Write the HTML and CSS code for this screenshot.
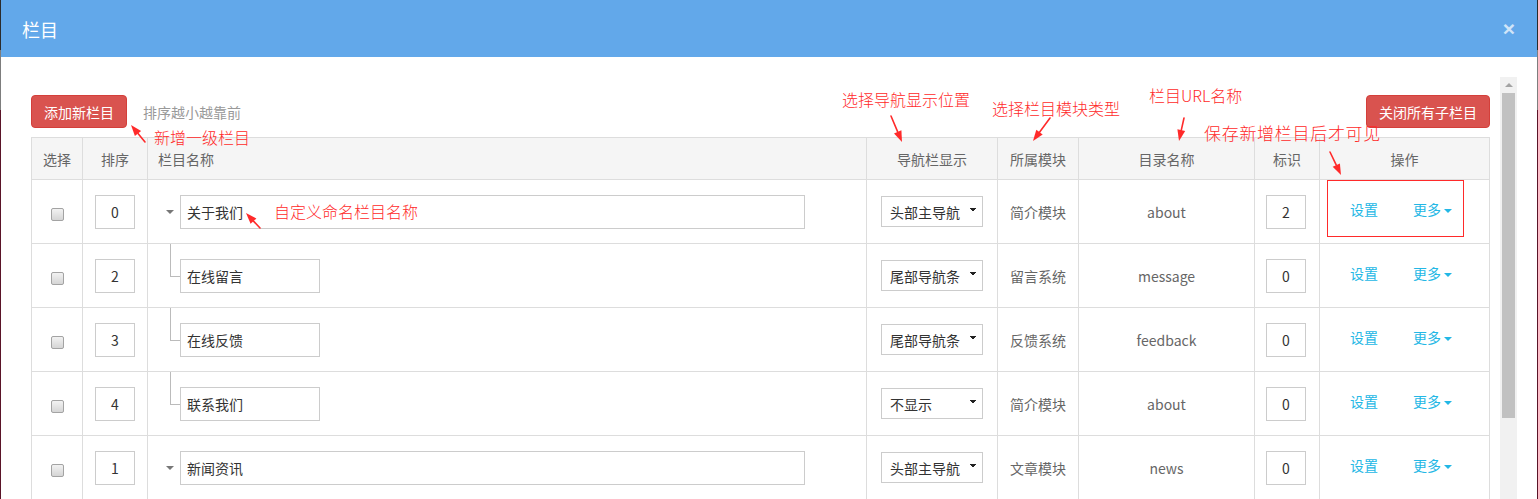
FILE: index.html
```html
<!DOCTYPE html>
<html lang="zh-CN">
<head>
<meta charset="utf-8">
<title>栏目</title>
<link rel="stylesheet" href="styles.css">
</head>
<body>
<div class="page">
  <div class="modal">
    <div class="modal-header">
      <h4 class="modal-title">栏目</h4>
      <span class="close">×</span>
    </div>
    <div class="modal-body">
      <div class="content">
        <div class="toolbar">
          <div class="toolbar-left">
            <button class="btn btn-danger">添加新栏目</button>
            <span class="hint">排序越小越靠前</span>
          </div>
          <button class="btn btn-danger">关闭所有子栏目</button>
        </div>
        <table class="grid">
          <colgroup>
            <col class="c-check"><col class="c-order"><col class="c-name"><col class="c-nav">
            <col class="c-mod"><col class="c-dir"><col class="c-flag"><col class="c-op">
          </colgroup>
          <thead>
            <tr>
              <th>选择</th><th>排序</th><th class="th-name">栏目名称</th><th>导航栏显示</th>
              <th>所属模块</th><th>目录名称</th><th>标识</th><th>操作</th>
            </tr>
          </thead>
          <tbody>
            <tr>
              <td><input type="checkbox" class="chk"></td>
              <td><input class="txt txt-order" value="0"></td>
              <td class="td-name"><div class="name-wrap"><span class="caret-down"></span><input class="txt txt-name" value="关于我们"></div></td>
              <td><select class="sel"><option>头部主导航</option></select></td>
              <td class="muted">简介模块</td>
              <td class="muted">about</td>
              <td class="td-flag"><input class="txt txt-order" value="2"></td>
              <td class="td-op"><a class="op-link">设置</a><a class="op-link op-more">更多<span class="caret-link"></span></a></td>
            </tr>
            <tr>
              <td><input type="checkbox" class="chk"></td>
              <td><input class="txt txt-order" value="2"></td>
              <td class="td-name"><div class="name-wrap"><span class="tree"></span><input class="txt txt-sub" value="在线留言"></div></td>
              <td><select class="sel"><option>尾部导航条</option></select></td>
              <td class="muted">留言系统</td>
              <td class="muted">message</td>
              <td class="td-flag"><input class="txt txt-order" value="0"></td>
              <td class="td-op"><a class="op-link">设置</a><a class="op-link op-more">更多<span class="caret-link"></span></a></td>
            </tr>
            <tr>
              <td><input type="checkbox" class="chk"></td>
              <td><input class="txt txt-order" value="3"></td>
              <td class="td-name"><div class="name-wrap"><span class="tree"></span><input class="txt txt-sub" value="在线反馈"></div></td>
              <td><select class="sel"><option>尾部导航条</option></select></td>
              <td class="muted">反馈系统</td>
              <td class="muted">feedback</td>
              <td class="td-flag"><input class="txt txt-order" value="0"></td>
              <td class="td-op"><a class="op-link">设置</a><a class="op-link op-more">更多<span class="caret-link"></span></a></td>
            </tr>
            <tr>
              <td><input type="checkbox" class="chk"></td>
              <td><input class="txt txt-order" value="4"></td>
              <td class="td-name"><div class="name-wrap"><span class="tree"></span><input class="txt txt-sub" value="联系我们"></div></td>
              <td><select class="sel"><option>不显示</option></select></td>
              <td class="muted">简介模块</td>
              <td class="muted">about</td>
              <td class="td-flag"><input class="txt txt-order" value="0"></td>
              <td class="td-op"><a class="op-link">设置</a><a class="op-link op-more">更多<span class="caret-link"></span></a></td>
            </tr>
            <tr>
              <td><input type="checkbox" class="chk"></td>
              <td><input class="txt txt-order" value="1"></td>
              <td class="td-name"><div class="name-wrap"><span class="caret-down"></span><input class="txt txt-name" value="新闻资讯"></div></td>
              <td><select class="sel"><option>头部主导航</option></select></td>
              <td class="muted">文章模块</td>
              <td class="muted">news</td>
              <td class="td-flag"><input class="txt txt-order" value="0"></td>
              <td class="td-op"><a class="op-link">设置</a><a class="op-link op-more">更多<span class="caret-link"></span></a></td>
            </tr>
            <tr>
              <td><input type="checkbox" class="chk"></td>
              <td><input class="txt txt-order" value="1"></td>
              <td class="td-name"><div class="name-wrap"><span class="tree"></span><input class="txt txt-sub" value="公司新闻"></div></td>
              <td><select class="sel"><option>不显示</option></select></td>
              <td class="muted">文章模块</td>
              <td class="muted">news</td>
              <td class="td-flag"><input class="txt txt-order" value="0"></td>
              <td class="td-op"><a class="op-link">设置</a><a class="op-link op-more">更多<span class="caret-link"></span></a></td>
            </tr>
          </tbody>
        </table>
      </div>
      <div class="scrollbar">
        <div class="sb-up"><span class="sb-arrow"></span></div>
        <div class="sb-track"><div class="sb-thumb"></div></div>
      </div>
    </div>
  </div>

  <div class="annotations">
    <span class="note note-1">新增一级栏目</span>
    <span class="note note-2">自定义命名栏目名称</span>
    <span class="note note-3">选择导航显示位置</span>
    <span class="note note-4">选择栏目模块类型</span>
    <span class="note note-5">栏目URL名称</span>
    <span class="note note-6">保存新增栏目后才可见</span>
    <div class="note-box"></div>
    <svg class="arrows" width="1538" height="499" viewBox="0 0 1538 499">
      <g stroke="#ff2a2a" stroke-width="1.6" fill="none" stroke-linecap="round">
        <line x1="145" y1="142" x2="138" y2="133.5"/>
        <line x1="260" y1="228" x2="253.5" y2="221.1"/>
        <line x1="891" y1="116" x2="897.7" y2="131.9"/>
        <line x1="1050" y1="118" x2="1039.5" y2="132.2"/>
        <line x1="1184" y1="118" x2="1181.3" y2="130.2"/>
        <line x1="1330" y1="152" x2="1336.3" y2="165.1"/>
      </g>
      <g fill="#ff2a2a">
        <polygon points="131,125 141.1,131 134.9,136"/>
        <polygon points="246,213 256.4,218.4 250.6,223.8"/>
        <polygon points="902,142 901.4,130.3 894,133.5"/>
        <polygon points="1033,141 1042.7,134.6 1036.3,129.8"/>
        <polygon points="1179,141 1185.2,131.1 1177.4,129.3"/>
        <polygon points="1341,175 1339.9,163.4 1332.7,166.8"/>
      </g>
    </svg>
  </div>
</div>
</body>
</html>
```

FILE: styles.css
```css
html, body {
  margin: 0;
  padding: 0;
  height: 100%;
  overflow: hidden;
}

body {
  font-family: "Noto Sans CJK SC", "Noto Sans", sans-serif;
  font-size: 14px;
  line-height: 1.42857;
  color: #333;
  background: linear-gradient(to bottom, #2b2b2b 0, #2b2b2b 50px, #7d7d7d 50px, #7d7d7d 110px, #5a1428 110px);
}

.page {
  position: relative;
  height: 100%;
}

.modal {
  margin: 0 1px;
  height: 100%;
  background: #fff;
  overflow: hidden;
  display: flex;
  flex-direction: column;
}

.modal-header {
  flex: none;
  height: 57px;
  box-sizing: border-box;
  background: #62a8ea;
  display: flex;
  align-items: center;
  justify-content: space-between;
  padding: 0 22px 0 21px;
}

.modal-title {
  margin: 0;
  font-size: 18px;
  font-weight: normal;
  color: #fff;
  line-height: 1;
}

.close {
  font-family: "Liberation Sans", Arial, sans-serif;
  font-size: 21px;
  font-weight: bold;
  line-height: 1;
  color: #fff;
  opacity: .7;
}

.modal-body {
  flex: 1;
  display: flex;
  padding: 20px 20px 0 30px;
  min-height: 0;
}

.content {
  flex: 1;
  padding: 18px 10px 0 0;
  overflow: hidden;
}

.toolbar {
  display: flex;
  align-items: center;
  justify-content: space-between;
  height: 33px;
}

.toolbar-left {
  display: flex;
  align-items: center;
}

.btn {
  font-family: inherit;
  font-size: 14px;
  line-height: 1;
  height: 33px;
  box-sizing: border-box;
  padding: 0 12px;
  border-radius: 4px;
  border: 1px solid #d43f3a;
  color: #fff;
  background: #d9534f;
}

.hint {
  margin-left: 16px;
  color: #999;
  font-size: 14px;
}

/* table */
.grid {
  margin-top: 9px;
  border-collapse: collapse;
  table-layout: fixed;
  width: 1459px;
}

.c-check { width: 51px; }
.c-order { width: 65px; }
.c-name { width: 719px; }
.c-nav { width: 131px; }
.c-mod { width: 81px; }
.c-dir { width: 176px; }
.c-flag { width: 65px; }
.c-op { width: 170px; }

.grid th,
.grid td {
  border: 1px solid #ddd;
  padding: 0;
  text-align: center;
  vertical-align: middle;
}

.grid thead tr { height: 42px; }
.grid tbody tr { height: 64px; }

.grid th {
  background: #f5f5f5;
  font-weight: normal;
  color: #666;
  font-size: 14px;
}

.grid th.th-name {
  text-align: left;
  padding-left: 10px;
}

.muted {
  color: #666;
}

.chk {
  appearance: none;
  -webkit-appearance: none;
  width: 13px;
  height: 13px;
  margin: 1px 0 0;
  border: 1px solid #a3a3a3;
  border-radius: 2px;
  background: linear-gradient(#f2f2f2, #d5d5d5);
  vertical-align: middle;
}

.txt {
  box-sizing: border-box;
  height: 34px;
  border: 1px solid #ccc;
  border-radius: 0;
  padding: 0 6px;
  font-family: inherit;
  font-size: 14px;
  color: #333;
  background: #fff;
  vertical-align: middle;
}

.txt-order {
  width: 40px;
  text-align: center;
  padding: 0;
}

.txt-name { width: 625px; }
.txt-sub { width: 140px; }

.td-name { text-align: left; }

.name-wrap {
  display: flex;
  align-items: center;
  height: 63px;
}

.caret-down {
  width: 0;
  height: 0;
  border-top: 4px solid #777;
  border-left: 4px solid transparent;
  border-right: 4px solid transparent;
  margin: 0 6px 0 18px;
}

.tree {
  align-self: flex-start;
  box-sizing: border-box;
  width: 10px;
  height: 33px;
  margin-left: 22px;
  border-left: 1px solid #bbb;
  border-bottom: 1px solid #bbb;
}

.sel {
  appearance: none;
  -webkit-appearance: none;
  box-sizing: border-box;
  width: 102px;
  height: 31px;
  border: 1px solid #ccc;
  border-radius: 0;
  padding: 0 0 0 8px;
  font-family: inherit;
  font-size: 14px;
  color: #333;
  background-color: #fff;
  background-image:
    linear-gradient(to top right, transparent 50%, #222 50%),
    linear-gradient(to bottom right, #222 50%, transparent 50%);
  background-size: 3px 4px, 3px 4px;
  background-position: 88px 11px, 91px 11px;
  background-repeat: no-repeat;
  vertical-align: middle;
}

.td-flag {
  text-align: left !important;
  padding-left: 11px !important;
}

.td-op {
  text-align: left !important;
  padding-left: 30px !important;
}

.op-link {
  color: #23b7e5;
  font-size: 14px;
  position: relative;
  top: -3px;
}

.op-more {
  margin-left: 35px;
}

.caret-link {
  display: inline-block;
  width: 0;
  height: 0;
  border-top: 4px solid #23b7e5;
  border-left: 4px solid transparent;
  border-right: 4px solid transparent;
  margin-left: 3px;
  vertical-align: middle;
}

/* scrollbar */
.scrollbar {
  flex: none;
  width: 17px;
  display: flex;
  flex-direction: column;
  background: #f1f1f1;
}

.sb-up {
  height: 16px;
  display: flex;
  align-items: center;
  justify-content: center;
}

.sb-arrow {
  width: 0;
  height: 0;
  border-bottom: 4px solid #a3a3a3;
  border-left: 4px solid transparent;
  border-right: 4px solid transparent;
}

.sb-track {
  flex: 1;
}

.sb-thumb {
  margin: 0 2px;
  height: 325px;
  background: #c1c1c1;
}

/* annotations */
.annotations {
  position: absolute;
  inset: 0;
  pointer-events: none;
}

.arrows {
  position: absolute;
  left: 0;
  top: 0;
}

.note {
  position: absolute;
  color: #ff2a2a;
  font-size: 16px;
  line-height: 16px;
  font-weight: 300;
  white-space: nowrap;
}

.note-1 { left: 154px; top: 129px; }
.note-2 { left: 274px; top: 203px; }
.note-3 { left: 842px; top: 91px; }
.note-4 { left: 992px; top: 100px; }
.note-5 { left: 1149px; top: 87px; }
.note-6 { left: 1204px; top: 125px; font-size: 17px; letter-spacing: 0.7px; }

.note-box {
  position: absolute;
  left: 1327px;
  top: 180px;
  width: 137px;
  height: 57px;
  box-sizing: border-box;
  border: 1px solid #ff2a2a;
}
```
